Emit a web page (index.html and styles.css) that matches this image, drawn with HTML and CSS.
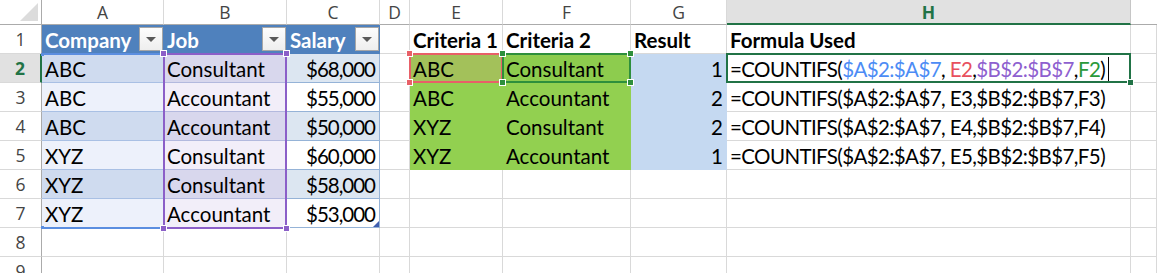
FILE: index.html
```html
<!DOCTYPE html>
<html>
<head>
<meta charset="utf-8">
<link rel="stylesheet" href="styles.css">
</head>
<body>
<div class="sheet">
  <!-- column headers -->
  <div class="hd corner"><svg class="tri" width="18" height="18" viewBox="0 0 18 18"><polygon points="18,0 18,18 0,18" fill="#dcdcdc"/></svg></div>
  <div class="hd">A</div>
  <div class="hd">B</div>
  <div class="hd">C</div>
  <div class="hd">D</div>
  <div class="hd">E</div>
  <div class="hd">F</div>
  <div class="hd">G</div>
  <div class="hd hd-act">H</div>
  <div class="hd hd-last"></div>

  <!-- row 1 -->
  <div class="rh">1</div>
  <div class="c th">Company<span class="dd"><i></i></span></div>
  <div class="c th">Job<span class="dd"><i></i></span></div>
  <div class="c th">Salary<span class="dd"><i></i></span></div>
  <div class="c d-col"></div>
  <div class="c bold">Criteria 1</div>
  <div class="c bold">Criteria 2</div>
  <div class="c bold">Result</div>
  <div class="c bold">Formula Used</div>
  <div class="c"></div>

  <!-- row 2 -->
  <div class="rh rh-act">2</div>
  <div class="c a1">ABC<span class="rng rng-a"><span class="hdl tl"></span><span class="hdl tr"></span><span class="hdl bl"></span><span class="hdl br"></span></span></div>
  <div class="c b1">Consultant<span class="rng rng-b"><span class="hdl tl"></span><span class="hdl tr"></span><span class="hdl bl"></span><span class="hdl br"></span></span></div>
  <div class="c n c1">$68,000</div>
  <div class="c d-col"></div>
  <div class="c e-act">ABC<span class="rng rng-e"><span class="hdl tl"></span><span class="hdl tr"></span><span class="hdl bl"></span><span class="hdl br"></span></span></div>
  <div class="c f-act">Consultant<span class="rng rng-f"><span class="hdl tl"></span><span class="hdl tr"></span><span class="hdl bl"></span><span class="hdl br"></span></span></div>
  <div class="c n g">1</div>
  <div class="c formula"><span class="ftxt">=COUNTIFS(<span class="r-blue">$A$2:$A$7</span>, <span class="r-red">E2</span>,<span class="r-purple">$B$2:$B$7</span>,<span class="r-green">F2</span>)<span class="caret"></span></span><span class="rng rng-h"><span class="fill"></span></span></div>
  <div class="c"></div>

  <!-- row 3 -->
  <div class="rh">3</div>
  <div class="c a2">ABC</div>
  <div class="c b2">Accountant</div>
  <div class="c n c2">$55,000</div>
  <div class="c d-col"></div>
  <div class="c grn">ABC</div>
  <div class="c grn">Accountant</div>
  <div class="c n g">2</div>
  <div class="c formula"><span class="ftxt">=COUNTIFS($A$2:$A$7, E3,$B$2:$B$7,F3)</span></div>
  <div class="c"></div>

  <!-- row 4 -->
  <div class="rh">4</div>
  <div class="c a1">ABC</div>
  <div class="c b1">Accountant</div>
  <div class="c n c1">$50,000</div>
  <div class="c d-col"></div>
  <div class="c grn">XYZ</div>
  <div class="c grn">Consultant</div>
  <div class="c n g">2</div>
  <div class="c formula"><span class="ftxt">=COUNTIFS($A$2:$A$7, E4,$B$2:$B$7,F4)</span></div>
  <div class="c"></div>

  <!-- row 5 -->
  <div class="rh">5</div>
  <div class="c a2">XYZ</div>
  <div class="c b2">Consultant</div>
  <div class="c n c2">$60,000</div>
  <div class="c d-col"></div>
  <div class="c grn">XYZ</div>
  <div class="c grn">Accountant</div>
  <div class="c n g">1</div>
  <div class="c formula"><span class="ftxt">=COUNTIFS($A$2:$A$7, E5,$B$2:$B$7,F5)</span></div>
  <div class="c"></div>

  <!-- row 6 -->
  <div class="rh">6</div>
  <div class="c a1">XYZ</div>
  <div class="c b1">Consultant</div>
  <div class="c n c1">$58,000</div>
  <div class="c d-col"></div>
  <div class="c"></div>
  <div class="c"></div>
  <div class="c"></div>
  <div class="c"></div>
  <div class="c"></div>

  <!-- row 7 -->
  <div class="rh">7</div>
  <div class="c a2 a-last">XYZ</div>
  <div class="c b2">Accountant</div>
  <div class="c n c2 c-last">$53,000<span class="rsz"></span></div>
  <div class="c d-col"></div>
  <div class="c"></div>
  <div class="c"></div>
  <div class="c"></div>
  <div class="c"></div>
  <div class="c"></div>

  <!-- row 8 -->
  <div class="rh">8</div>
  <div class="c"></div>
  <div class="c"></div>
  <div class="c"></div>
  <div class="c"></div>
  <div class="c"></div>
  <div class="c"></div>
  <div class="c"></div>
  <div class="c"></div>
  <div class="c"></div>

  <!-- row 9 -->
  <div class="rh">9</div>
  <div class="c"></div>
  <div class="c"></div>
  <div class="c"></div>
  <div class="c"></div>
  <div class="c"></div>
  <div class="c"></div>
  <div class="c"></div>
  <div class="c"></div>
  <div class="c"></div>
</div>
</body>
</html>
```

FILE: styles.css
```css
html, body {
  margin: 0;
  padding: 0;
  background: #fff;
  overflow: hidden;
}

.sheet {
  display: grid;
  grid-template-columns: 42px 122px 123px 93px 30px 93px 128px 96px 404px 26px;
  grid-template-rows: 25px repeat(9, 29px);
  font-family: Lato, "Liberation Sans", sans-serif;
  font-size: 20.5px;
  color: #000;
  width: 1157px;
}

.hd {
  box-sizing: border-box;
  border-right: 1px solid #d9d9d9;
  border-bottom: 1px solid #ababab;
  display: flex;
  align-items: center;
  justify-content: center;
  font-family: "Open Sans", "Liberation Sans", sans-serif;
  font-size: 17.5px;
  color: #444;
  background: #fff;
}

.corner {
  border-right: 1px solid #ababab;
  position: relative;
}
.corner .tri {
  position: absolute;
  right: 3px;
  bottom: 3px;
}

.hd-act {
  background: #e1e1e1;
  color: #217346;
  font-weight: bold;
  border-bottom: 2px solid #217346;
  border-right-color: #c6c6c6;
}
.hd-last {
  border-right: none;
}

.rh {
  box-sizing: border-box;
  border-right: 1px solid #ababab;
  border-bottom: 1px solid #d9d9d9;
  display: flex;
  align-items: center;
  justify-content: center;
  font-family: "Open Sans", "Liberation Sans", sans-serif;
  font-size: 17.5px;
  color: #444;
}
.rh-act {
  background: #e1e1e1;
  color: #217346;
  font-weight: bold;
  border-right: 2px solid #217346;
}

.c {
  box-sizing: border-box;
  border-right: 1px solid #d9d9d9;
  border-bottom: 1px solid #d9d9d9;
  display: flex;
  align-items: center;
  padding: 1px 3px 0 3px;
  white-space: nowrap;
  min-width: 0;
  position: relative;
}

.n {
  justify-content: flex-end;
  letter-spacing: -1px;
  padding-right: 4px;
}

.bold {
  font-weight: bold;
}

.formula {
  letter-spacing: -0.6px;
}
.ftxt {
  white-space: pre;
  display: inline-flex;
  align-items: center;
}

/* table header */
.th {
  background: #4f81bd;
  color: #fff;
  font-weight: bold;
  border-right: none;
  border-bottom: none;
}
.dd {
  position: absolute;
  right: 1px;
  top: 2px;
  width: 24px;
  height: 24px;
  box-sizing: border-box;
  border: 1px solid #a6a6a6;
  background: linear-gradient(#fdfdfd, #eeeeee);
  display: flex;
  align-items: center;
  justify-content: center;
}
.dd i {
  width: 0;
  height: 0;
  border-left: 5px solid transparent;
  border-right: 5px solid transparent;
  border-top: 5px solid #5a5a5a;
}

/* banded rows (with reference highlight tint) */
.a1 { background: #cfdbef; border-color: #a9c0e4; }
.a2 { background: #edf1fb; border-color: #a9c0e4; }
.b1 { background: #d8d7ed; border-color: #b3b9de; }
.b2 { background: #f2eef9; border-color: #b3b9de; }
.c1 { background: #dce6f1; border-color: #95b3d7; }
.c2 { background: #ffffff; border-color: #95b3d7; }
.a-last, .c-last { border-bottom-color: #95b3d7; }

.grn {
  background: #92d050;
  border-color: #92d050;
}
.e-act {
  background: #a3c15a;
  border-color: #a3c15a;
}
.f-act {
  background: #8dcc4e;
  border-color: #8dcc4e;
}
.g {
  background: #c5d9f1;
  border-color: #c5d9f1;
}

.r-blue { color: #4c8cf5; }
.r-red { color: #e8505d; }
.r-purple { color: #8e5fcf; }
.r-green { color: #2a9a3a; }
.caret {
  display: inline-block;
  width: 1px;
  height: 24px;
  background: #000;
  margin-left: 3px;
}

/* reference range overlays (lie over the cells) */
.rng {
  position: absolute;
  pointer-events: none;
  box-sizing: border-box;
  z-index: 5;
}
.rng-a {
  left: 0;
  top: -1px;
  width: 122px;
  height: 176px;
  border-top: 2px solid #5b8ee0;
  border-bottom: 2px solid #5b8ee0;
}
.rng-a .hdl {
  width: 3px;
  height: 3px;
  background: #5b8ee0;
  border: none;
}
.rng-a .hdl.tl, .rng-a .hdl.bl { left: -1px; }
.rng-a .hdl.tr, .rng-a .hdl.br { right: -1px; }
.rng-a .hdl.tl, .rng-a .hdl.tr { top: -2px; }
.rng-a .hdl.bl, .rng-a .hdl.br { bottom: -2px; }

.rng-b {
  left: -1px;
  top: -1px;
  width: 124px;
  height: 176px;
  border: 2px solid #8b5fc8;
}
.rng-b .hdl { background: #8b5fc8; }
.rng-e {
  left: -1px;
  top: -1px;
  width: 94px;
  height: 30px;
  border: 2px solid #e86068;
}
.rng-e .hdl { background: #e86068; }
.rng-f {
  left: -1px;
  top: -1px;
  width: 129px;
  height: 30px;
  border: 2px solid #2e8f3c;
}
.rng-f .hdl { background: #2e8f3c; }
.rng-h {
  left: -1px;
  top: -1px;
  width: 405px;
  height: 30px;
  border: 2px solid #217346;
}

.hdl {
  position: absolute;
  width: 5px;
  height: 5px;
  border: 1px solid #fff;
}
.hdl.tl { left: -5px; top: -5px; }
.hdl.tr { right: -5px; top: -5px; }
.hdl.bl { left: -5px; bottom: -5px; }
.hdl.br { right: -5px; bottom: -5px; }

.fill {
  position: absolute;
  right: -5px;
  bottom: -5px;
  width: 5px;
  height: 5px;
  background: #217346;
  border: 1px solid #fff;
}

.rsz {
  position: absolute;
  right: 0;
  bottom: 0;
  width: 0;
  height: 0;
  border-left: 6px solid transparent;
  border-bottom: 6px solid #3f5fb0;
}
```
